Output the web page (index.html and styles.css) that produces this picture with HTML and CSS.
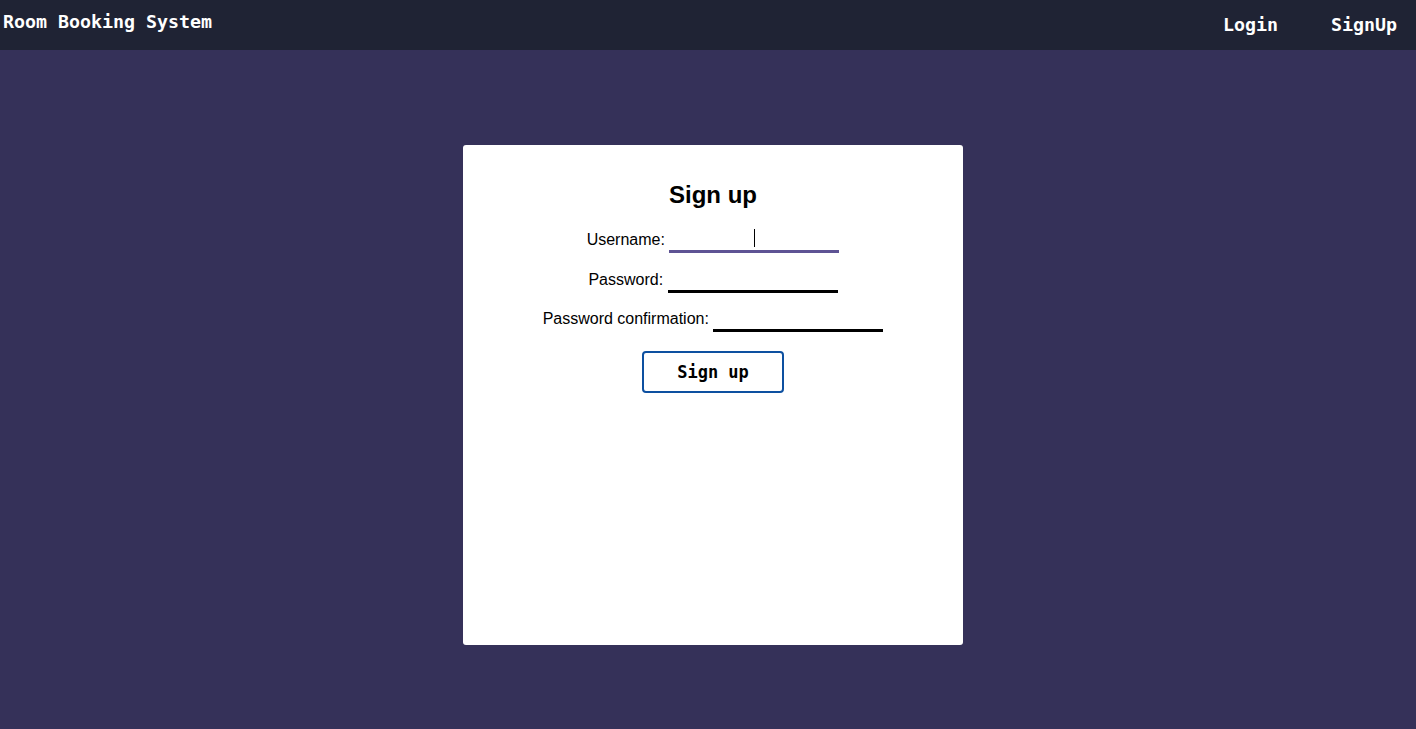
FILE: index.html
```html
<!DOCTYPE html>
<html lang="en">
<head>
<meta charset="utf-8">
<title>Room Booking System</title>
<link rel="stylesheet" href="styles.css">
</head>
<body>
<header class="topbar">
  <div class="brand">Room Booking System</div>
  <nav class="nav">
    <a class="nav-link" href="#">Login</a>
    <a class="nav-link" href="#">SignUp</a>
  </nav>
</header>
<main class="main">
  <section class="card">
    <h2 class="card-title">Sign up</h2>
    <form class="form">
      <div class="row"><label for="u">Username:</label> <span class="field-wrap focused"><input id="u" class="field field-focus" type="text"></span></div>
      <div class="row"><label for="p">Password:</label> <span class="field-wrap"><input id="p" class="field" type="password"></span></div>
      <div class="row"><label for="pc">Password confirmation:</label> <span class="field-wrap"><input id="pc" class="field" type="password"></span></div>
      <button class="btn" type="button">Sign up</button>
    </form>
  </section>
</main>
</body>
</html>
```
FILE: styles.css
```css
html, body {
  margin: 0;
  padding: 0;
  height: 100%;
}
body {
  background: #353159;
  font-family: "Liberation Sans", Arial, sans-serif;
}
.topbar {
  height: 50px;
  background: #1f2334;
  display: flex;
  justify-content: space-between;
  align-items: flex-start;
  padding: 0 19px 0 3px;
  box-sizing: border-box;
  font-family: "DejaVu Sans Mono", monospace;
  font-weight: bold;
  font-size: 18.3px;
  line-height: 18px;
  color: #ffffff;
}
.brand {
  padding-top: 13px;
}
.nav {
  display: flex;
  gap: 53px;
  padding-top: 16px;
}
.nav-link {
  color: #ffffff;
  text-decoration: none;
}
.main {
  display: flex;
  justify-content: center;
  padding: 95px 0 0 10px;
}
.card {
  width: 500px;
  height: 500px;
  background: #ffffff;
  border-radius: 3px;
  box-sizing: border-box;
  padding-top: 16px;
  display: flex;
  flex-direction: column;
  align-items: center;
}
.card-title {
  margin: 20px 0 0;
  font-size: 24px;
  line-height: 28px;
  font-weight: bold;
  color: #000;
}
.form {
  margin-top: 22px;
  display: flex;
  flex-direction: column;
  align-items: center;
  gap: 17.5px;
}
.row {
  font-size: 16px;
  line-height: 18px;
  color: #000;
}
.field-wrap {
  position: relative;
  display: inline-block;
}
.focused::after {
  content: "";
  position: absolute;
  left: 85px;
  top: -2px;
  width: 1px;
  height: 18px;
  background: #000;
}
.field {
  width: 170px;
  border: none;
  border-bottom: 3px solid #000;
  padding: 0 0 1px;
  margin: 0;
  font-family: "Liberation Sans", Arial, sans-serif;
  font-size: 16px;
  line-height: 18px;
  height: 22px;
  box-sizing: border-box;
  text-align: center;
  outline: none;
  background: transparent;
}
.field-focus {
  border-bottom-color: #5e5394;
}
.btn {
  margin-top: 1px;
  width: 142px;
  height: 42px;
  border: 2px solid #0d50a0;
  border-radius: 4px;
  background: #ffffff;
  font-family: "DejaVu Sans Mono", monospace;
  font-weight: bold;
  font-size: 17px;
  color: #000;
  cursor: pointer;
}
```
